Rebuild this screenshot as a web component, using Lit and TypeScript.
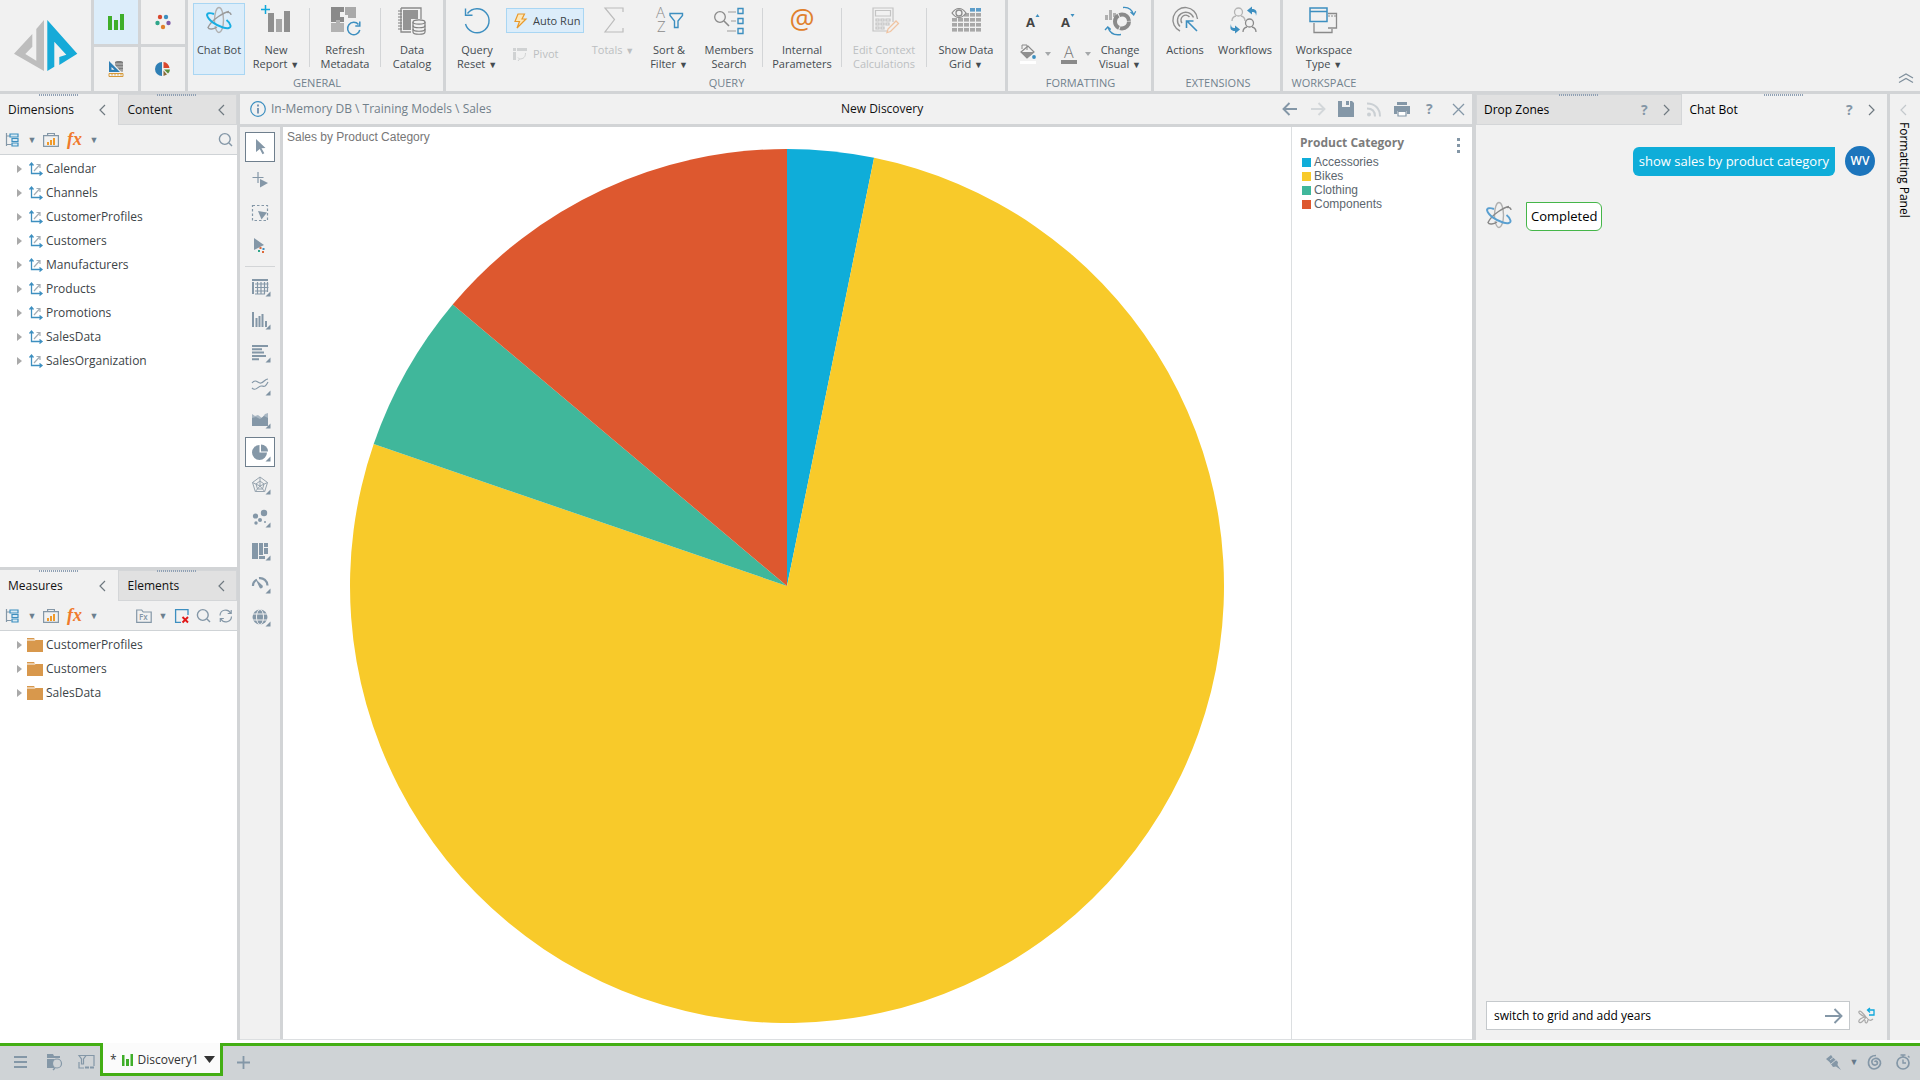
import { LitElement, html, svg, css, nothing } from "lit";
import { customElement } from "lit/decorators.js";
import { classMap } from "lit/directives/class-map.js";

const BLUE = "#3d8fc0";
const CYAN = "#0fa8dc";
const GREY = "#8a8a8a";
const LIGHT = "#b0b0b0";
const SLATE = "#8497a7";
const ORANGE = "#e0802c";

type Glyph = unknown;

const icon = (w: number, h: number, body: Glyph) =>
  html`<svg class="icon" width=${w} height=${h} viewBox="0 0 ${w} ${h}" fill="none" aria-hidden="true">${body}</svg>`;

const atom = (main: string, dark: string) => svg`
  <g fill="none" stroke-width="1.400">
    <ellipse cx="15" cy="16" rx="4.500" ry="12.500" stroke="${LIGHT}" stroke-dasharray="22 3 40"/>
    <path d="M25 7.500C21 8 8 15 4 23.500c1 2.500 6 1.500 9-.5M27 11c0-2-1.500-3-4-2.500" stroke="${dark}"/>
    <path d="M10 10C6 8.500 3 9 3 11c1 5 9 10.500 16 12.500 5 1.500 8 .5 7.500-2-.5-2-2-4-4-5.500" stroke="${main}" stroke-width="1.900"/>
  </g>`;

const person = (x: number, y: number, c: string) => svg`
  <g stroke="${c}" stroke-width="1.3"><circle cx="${x}" cy="${y}" r="4"/>
  <path d="M${x - 6.5} ${y + 9}c0-3 2-4.500 4-5M${x + 6.5} ${y + 9}c0-3-2-4.500-4-5"/></g>`;

const gridCells = () => {
  const out: Glyph[] = [];
  for (let r = 0; r < 5; r++)
    for (let c = 0; c < 5; c++) {
      if (r < 2 && c < 2 || (r === 0 && c === 2)) continue;
      out.push(svg`<rect x="${1 + c * 6}" y="${4 + r * 5}" width="5" height="3.600" fill="${r === 0 ? "#5d9dc9" : "#a8a8a8"}"/>`);
    }
  return out;
};

const R: Record<string, Glyph> = {
  atom: atom("#19aee2", "#9a9a9a"),
  report: svg`<path d="M7 9h6v19H7zM23 7h6v21h-6z" fill="#8f8f8f"/><path d="M15 15h6v13h-6z" fill="#a6a6a6"/><path d="M4.500 1v9M0 5.500h9" stroke="${CYAN}" stroke-width="1.500"/>`,
  metadata: svg`<path d="M1 3h13v5h-4v5h4v5H1z" fill="#8a8a8a"/><path d="M15 3h11v11h-8v-3h-3z" fill="#a9a9a9"/><path d="M1 19h5v-3h4v3h4v9H1z" fill="#b2b2b2"/>
    <path d="M28.500 20.500A6.200 6.200 0 1 0 29.800 26M29.800 17.500v4.500h-4.500" stroke="${BLUE}" stroke-width="1.500"/>`,
  catalog: svg`<path d="M4 4h20v11M4 4v24h10" stroke="#8a8a8a" stroke-width="1.300"/><path d="M6 6h15v9h-7v11H6z" fill="#949494"/>
    <path d="M1 7h4M1 10h4M1 13h4M1 16h4M1 19h4M1 22h4M1 25h4" stroke="#7f7f7f" stroke-width="1.200"/>
    <g fill="#f1f1f1" stroke="#7f7f7f" stroke-width="1.200"><path d="M16 18v10c0 3 12 3 12 0V18"/><ellipse cx="22" cy="18" rx="6" ry="2.200"/></g>
    <path d="M16 21.500c0 3 12 3 12 0M16 25c0 3 12 3 12 0" stroke="#7f7f7f" stroke-width="1.200"/>`,
  reset: svg`<path d="M3.500 20A12 12 0 1 0 5.500 9.500M3.500 4.500v6.800h7" stroke="${BLUE}" stroke-width="1.400"/>`,
  sigma: svg`<path d="M25 8V4H7l9.500 11.500L7 28h18v-4" stroke="#bcbcbc" stroke-width="1.200"/>`,
  sort: svg`<g fill="#8a8a8a" font-family="Open Sans,Noto Sans,sans-serif" font-size="15" font-weight="300"><text x="2" y="14">A</text><text x="3" y="28">Z</text></g>
    <path d="M16 9.500h12.500v2L24 17v6.500h-3.500V17L16 11.500z" stroke="${BLUE}" stroke-width="1.400"/>`,
  members: svg`<circle cx="6" cy="13" r="5.300" stroke="#8a8a8a" stroke-width="1.300"/><path d="M10 17l5 5" stroke="#8a8a8a" stroke-width="1.600"/>
    <path d="M14 8h8M17 17h5M13 27h9" stroke="#9c9c9c" stroke-width="1.200"/><path d="M24 4.500h5v5h-5zM24 14.500h5v5h-5zM24 24.500h5v5h-5z" stroke="${BLUE}" stroke-width="1.400"/>`,
  at: svg`<text x="15" y="25" text-anchor="middle" fill="${ORANGE}" font-family="Open Sans,Noto Sans,sans-serif" font-size="28">@</text>`,
  calc: svg`<g stroke="#c4c4c4" stroke-width="1.200"><path d="M24 18V4H4v23h14"/><path d="M6.500 6.500h15v5.500h-15z"/>
    <path d="M7 15h3v2H7zM12 15h3v2h-3zM17 15h4v2h-4zM7 19h3v2H7zM12 19h3v2h-3zM17 19h3v2h-3zM7 23h3v2H7zM12 23h3v2h-3z"/></g>
    <path d="M18 28.500l1-3.500 8-8 2.500 2.500-8 8z" stroke="#f0c4a2" stroke-width="1.300"/>`,
  datagrid: svg`${gridCells()}<path d="M1 9c4-6 10-6 14 0-4 6-10 6-14 0z" fill="#f1f1f1" stroke="#8a8a8a" stroke-width="1.200"/><circle cx="8" cy="9" r="3" stroke="#8a8a8a" stroke-width="1.300"/>`,
  visual: svg`<path d="M0 11h3v5H0zM4 6h3v10H4zM8 9h3v4H8z" fill="#b0b0b0"/><circle cx="17" cy="17.500" r="7" stroke="#8a8a8a" stroke-width="4" stroke-dasharray="13 1 15 1"/>
    <path d="M18 3.500c5-.5 9 2 10.500 7M25.500 8l3.200 3 2-3.800M16 30.500c-6 1-11-1-13-7M0 26l2.800-3 3 2.500" stroke="${BLUE}" stroke-width="1.300"/>`,
  actions: svg`<g stroke="#8f8f8f" stroke-width="1.400"><path d="M10 27A12.300 12.300 0 1 1 27.500 15"/><path d="M10 22.500A8.300 8.300 0 1 1 23.500 13.500"/><path d="M12 19A4.700 4.700 0 1 1 19.500 13"/></g>
    <path d="M27 27L17 17M16.500 24v-7h7" stroke="${BLUE}" stroke-width="1.600"/>`,
  workflows: svg`${person(8.5, 8, "#b4b4b4")}${person(19.5, 19, "#8a8a8a")}<path d="M26 12c0-3-1-4-4-4v2.500l-5-4 5-4V5c4 0 5.500 2 4 7zM1 20c0 3 1 4 4 4v-2.500l5 4-5 4V27c-4 0-5.500-2-4-7z" fill="${BLUE}"/>`,
  workspace: svg`<path d="M19 9.500h8.500V24H19M5 19v9.500h18V25" stroke="#8a8a8a" stroke-width="1.300"/><path d="M19 12h8" stroke="#8a8a8a" stroke-width="1" stroke-dasharray="2 1"/>
    <path d="M1 4h17v13.500H1zM1 7.500h17" stroke="${BLUE}" stroke-width="1.500"/>`,
};

/* 16px panel-toolbar glyphs */
const S: Record<string, Glyph> = {
  tree: svg`<path d="M1.500 1v13M1.500 4h5M1.500 12.500h5M8 7.500h2" stroke="${SLATE}" stroke-width="1.200"/><path d="M5 2h8v3H5zM7 6.500h6v3H7zM7 11h6v3H7z" fill="#d8eaf4" stroke="${BLUE}" stroke-width="1.200"/>`,
  brief: svg`<path d="M.6 3.600h14.800v10.800H.6zM4.600 3.500v-2h6.800v2" stroke="${SLATE}" stroke-width="1.200"/><path d="M4 10h2v3H4zM7 8h2v5H7zM10 6h2v7h-2z" fill="#f09a2a"/>`,
  fx: svg`<text x="0" y="13" fill="#f07a2c" font-family="Liberation Serif,serif" font-style="italic" font-weight="700" font-size="18">fx</text>`,
  search: svg`<circle cx="6.800" cy="7" r="5.400" stroke="${SLATE}" stroke-width="1.400"/><path d="M11 11l3 3" stroke="${SLATE}" stroke-width="1.400"/>`,
  fxFolder: svg`<path d="M.7 14.300V2h5l1.500 2h8v10.300z" stroke="${SLATE}" stroke-width="1.200"/><text x="3" y="12" fill="${SLATE}" font-family="Open Sans,sans-serif" font-size="8" font-weight="600">Fx</text>`,
  boxX: svg`<path d="M14 7V1.600H1.600V14.400H7" stroke="${BLUE}" stroke-width="1.300"/><path d="M8.500 9l5.500 5.500M14 9l-5.500 5.500" stroke="#e01818" stroke-width="1.900"/>`,
  refresh: svg`<path d="M2 7.500A5.600 5.600 0 0 1 12.500 5M13.500 8.500A5.600 5.600 0 0 1 3 11M13.200 2v3.500h-3.500M2.300 14v-3.500h3.500" stroke="${SLATE}" stroke-width="1.200"/>`,
  axis: svg`<path d="M4.500 2.500v10H14M2.500 4.500l2-2.500 2 2.500M12.500 10.500l2.500 2-2.500 2" stroke="${BLUE}" stroke-width="1.300"/><path d="M7 10l5.500-6M9.500 3.500H13V7" stroke="#a4aeb6" stroke-width="1.200"/>`,
  folder: svg`<path d="M0 1h7l1 1.500H0zM0 3.600h8l.6-.6H16V15H0z" fill="#d8984c"/>`,
};

/* 20px visual-palette glyphs */
const corner = svg`<path d="M19.500 14.500v5h-5z" fill="#7f92a2"/>`;
const P: Record<string, Glyph> = {
  pointer: svg`<path d="M5 2l9.500 9-4 .3 2.800 5-1.800 1-2.700-5.300L5 15z" fill="${SLATE}"/>`,
  addPoint: svg`<path d="M7 2v11M1.500 7.500h11" stroke="${SLATE}" stroke-width="1.200"/><path d="M9 9l8 4-8 4.500z" fill="${SLATE}"/>`,
  lasso: svg`<path d="M1.500 2.500h15v15h-15z" stroke="${SLATE}" stroke-width="1.200" stroke-dasharray="2.500 2"/><path d="M7 8l9 1.500-5.500 7z" fill="${SLATE}"/>`,
  highlight: svg`<path d="M3 2l10 7-10 5z" fill="${SLATE}"/><path d="M7 14h2v2H7z" fill="#2fa68a"/><path d="M8.500 11h2v2h-2zM11 15h2v2h-2z" fill="#dd6a3a"/><path d="M11.500 12h2v2h-2z" fill="${BLUE}"/>`,
  grid: svg`<path d="M1 2h16v2H1zM1 5h2v12H1z" fill="${SLATE}"/><path d="M6.500 5v12M10 5v12M13.500 5v12M16.500 5v10M4 7h13.500M4 10.500h13.500M4 14h13M4 17h10" stroke="${SLATE}" stroke-width="1.200"/>${corner}`,
  column: svg`<path d="M1 2h2v15H1zM4.500 8h2v9h-2zM7.500 6h2v11h-2zM10.500 4h2v13h-2zM14 11h2v6h-2z" fill="${SLATE}"/>${corner}`,
  bar: svg`<path d="M1 2h16v2H1zM1 5.300h10v2H1zM1 8.600h12v2H1zM1 11.900h14v2H1zM1 15.200h7v2H1z" fill="${SLATE}"/>${corner}`,
  line: svg`<path d="M1 7c4-5 6 1 9 0s4-4 7-4M1 12c4 4 6-2 9-2s4 2 7-4" stroke="${SLATE}" stroke-width="1.200"/>${corner}`,
  area: svg`<path d="M1 5l3 2 3-1 4 3 3-4 3-1v13H1z" fill="#a9b7c3"/><path d="M1 9l4-1 4 2 4-3 4 2v8H1z" fill="${SLATE}"/>${corner}`,
  pie: svg`<path d="M8.500 3a7.500 7.500 0 1 0 7.500 7.500H8.500z" fill="${SLATE}"/><path d="M10 2.500a7 7 0 0 1 7 7h-7z" fill="${SLATE}"/>${corner}`,
  radar: svg`<path d="M9 2l7.500 5.500-2.800 9H4.300L1.500 7.500zM9 6l4 3-1.500 5h-5L5 9zM9 2v9M1.500 7.500L9 11l7.500-3.500M4.300 16.500L9 11l4.700 5.500" stroke="#96a3ae" stroke-width="1"/>${corner}`,
  scatter: svg`<g fill="${SLATE}"><circle cx="13" cy="5" r="3.200"/><circle cx="4.500" cy="8" r="2.600"/><circle cx="9" cy="12" r="2"/><circle cx="5" cy="15" r="1.700"/><circle cx="14" cy="14" r="1"/></g>${corner}`,
  treemap: svg`<path d="M1 2h6v16H1zM8 2h4v12H8zM13 2h4v4h-4zM13 7h4v6h-4zM8 15h6v3H8z" fill="${SLATE}"/>${corner}`,
  gauge: svg`<path d="M2 12a7 6.500 0 0 1 4-6.300M8 4.200a7.500 7.500 0 0 1 8.500 7.300" stroke="${SLATE}" stroke-width="2.200"/><path d="M4.500 5l7 6.500a1.800 1.800 0 0 1-3 2z" fill="${SLATE}"/>${corner}`,
  globe: svg`<circle cx="9" cy="10" r="7.500" fill="${SLATE}"/><path d="M1.500 7h15M1.500 13h15" stroke="#f1f1f1" stroke-width="1.200"/><ellipse cx="9" cy="10" rx="3.500" ry="7.500" stroke="#f1f1f1"/>${corner}`,
};

interface RibbonItem { icon: string; lines: string[]; menu?: boolean; size: string; off?: boolean; on?: boolean; }

@customElement("ribbon-button")
class RibbonButton extends LitElement {
  static properties = { item: { attribute: false } };
  declare item: RibbonItem;
  static styles = css`
    :host { display: block; }
    button { font: inherit; font-size: 11px; color: #444b50; height: 72px; padding: 0; margin: 0; border: 1px solid transparent; background: none;
      display: flex; flex-direction: column; align-items: center; gap: 9px; line-height: 14px; white-space: nowrap; }
    .s { width: 52px; } .q { width: 54px; } .m { width: 58px; } .l { width: 62px; } .x { width: 66px; } .xx { width: 74px; } .w { width: 80px; }
    .on { background: #dcedfa; border-color: #a9d6f3; }
    .off { color: #bcbfc1; }
    .icon { flex: none; overflow: visible; }
    span { display: block; }
    small { font-size: 9px; }
  `;
  render() {
    const b = this.item;
    const last = b.lines.length - 1;
    return html`<button class=${classMap({ [b.size]: true, on: !!b.on, off: !!b.off })} ?disabled=${b.off}>
      ${icon(30, 30, R[b.icon])}
      <span>${b.lines.map((t, i) => html`<span>${t}${b.menu && i === last ? html` <small>▼</small>` : nothing}</span>`)}</span>
    </button>`;
  }
}

const slices = [
  { name: "Accessories", color: "#0fadd9", to: 11.5 },
  { name: "Bikes", color: "#f8ca2a", to: 288.95 },
  { name: "Clothing", color: "#40b79b", to: 310.1 },
  { name: "Components", color: "#dd582f", to: 360 },
];

@customElement("pie-chart")
class PieChart extends LitElement {
  static styles = css`
    :host { display: block; min-height: 0; }
    svg { display: block; width: 100%; height: 100%; }
  `;
  render() {
    const r = 437;
    let from = 0;
    return html`<svg viewBox="0 0 874 874" role="img" aria-label="Sales by Product Category">
      ${slices.map((s) => {
        const p = (a: number) => {
          const t = (a * Math.PI) / 180;
          return `${(r + r * Math.sin(t)).toFixed(1)} ${(r - r * Math.cos(t)).toFixed(1)}`;
        };
        const d = `M${r} ${r}L${p(from)}A${r} ${r} 0 ${s.to - from > 180 ? 1 : 0} 1 ${p(s.to)}Z`;
        from = s.to;
        return svg`<path d="${d}" fill="${s.color}"/>`;
      })}
    </svg>`;
  }
}

const general: (RibbonItem | null)[] = [
  { icon: "atom", lines: ["Chat Bot"], size: "s", on: true },
  { icon: "report", lines: ["New", "Report"], menu: true, size: "l" },
  null,
  { icon: "metadata", lines: ["Refresh", "Metadata"], size: "x" },
  null,
  { icon: "catalog", lines: ["Data", "Catalog"], size: "m" },
];
const query: (RibbonItem | null)[] = [
  { icon: "sigma", lines: ["Totals"], menu: true, size: "q", off: true },
  { icon: "sort", lines: ["Sort &", "Filter"], menu: true, size: "m" },
  { icon: "members", lines: ["Members", "Search"], size: "l" },
  null,
  { icon: "at", lines: ["Internal", "Parameters"], size: "xx" },
  null,
  { icon: "calc", lines: ["Edit Context", "Calculations"], size: "w", off: true },
  null,
  { icon: "datagrid", lines: ["Show Data", "Grid"], menu: true, size: "xx" },
];

@customElement("app-root")
class AppRoot extends LitElement {
  static styles = css`
    :host { display: flex; flex-direction: column; height: 100vh; overflow: hidden; background: #fff; color: #3c4448;
      font: 12px/16px "Open Sans", "Noto Sans", sans-serif; --line: #d2d4d6; --panel: #f1f1f1; }
    * { box-sizing: border-box; }
    button { font: inherit; color: inherit; background: none; border: 0; padding: 0; margin: 0; display: flex; align-items: center; justify-content: center; }
    .icon { display: block; flex: none; overflow: visible; }

    .ribbon { display: flex; background: var(--panel); border-bottom: 3px solid var(--line); height: 94px; flex: none; }
    .logo { width: 91px; display: flex; align-items: center; justify-content: center; }
    .modes { display: grid; grid-template-columns: 44px 44px; grid-template-rows: 44px 44px; gap: 3px; background: var(--line); border: solid var(--line); border-width: 0 3px; }
    .modes button { background: var(--panel); }
    .modes .on { background: #dcedfa; }
    .group { display: flex; flex-direction: column; border-right: 3px solid var(--line); padding: 3px 2px 0 5px; }
    .group.wide { padding-left: 4px; }
    .group.end { border-right: 0; padding-right: 4px; }
    .items { display: flex; height: 72px; }
    .caption { font-size: 11px; line-height: 16px; text-align: center; color: #72828e; }
    .rule { width: 1px; height: 59px; margin: 5px 2px; background: #d3d5d7; }
    .stack { width: 78px; margin: 5px 2px; display: flex; flex-direction: column; gap: 8px; font-size: 11px; }
    .stack button { height: 25px; gap: 6px; justify-content: flex-start; padding-left: 6px; border: 1px solid transparent; white-space: nowrap; }
    .stack .on { background: #dcedfa; border-color: #a9d6f3; }
    .stack button:disabled { color: #bcbfc1; }
    .fonts { display: grid; grid-template-columns: 41px 30px; grid-template-rows: 34px 34px; padding-left: 8px; }
    .fonts button { justify-content: flex-start; gap: 8px; }
    .collapse { margin-left: auto; align-self: flex-end; padding: 8px 7px; }

    .body { flex: 1; min-height: 0; display: flex; }
    .left { width: 240px; flex: none; border-right: 3px solid var(--line); display: flex; flex-direction: column; }
    .pane { flex: 0 0 auto; }
    .pane.upper { flex: 0 0 calc(50% + 3px); border-bottom: 3px solid var(--line); }
    .tabs { display: flex; height: 31px; background: var(--panel); flex: none; }
    .tab { flex: 1 1 0; display: flex; align-items: center; gap: 16px; padding: 0 12px 0 8px; color: #111; font-weight: 500; position: relative; white-space: nowrap; }
    .tab span { flex: 1; }
    .tab.back { background: #e1e1e1; box-shadow: inset 0 0 0 1px #d4d6d8; }
    .left .tab.back { padding-left: 10px; }
    .tab::before { content: ""; position: absolute; top: 0; left: calc(50% - 20px); width: 40px; height: 2px;
      background: repeating-linear-gradient(90deg, #8fa0b4 0 1px, transparent 1px 2px); }
    .tools { display: flex; align-items: center; height: 30px; padding: 0 3px 0 5px; background: var(--panel); border-bottom: 1px solid #cfd3d6; }
    .tools .drop { font-size: 9px; color: #6c7f8e; width: 22px; }
    .tools .gap { width: 8px; } .tools .gap.tight { width: 6px; } .tools .push { margin-left: auto; }
    ul { list-style: none; margin: 0; padding: 2px 0 0; }
    li button { height: 24px; gap: 3px; padding-left: 17px; }

    .center { flex: 1; min-width: 0; display: flex; flex-direction: column; }
    .head { display: grid; grid-template-columns: 14fr auto 13fr; align-items: center; height: 33px; flex: none; background: var(--panel); border-bottom: 3px solid var(--line); padding: 0 0 0 10px; }
    .crumb { display: flex; align-items: center; gap: 5px; color: #71808a; white-space: nowrap; }
    h1 { font: inherit; font-weight: 500; color: #111; margin: 0; }
    .acts { display: flex; justify-content: flex-end; }
    .acts button { width: 28px; height: 28px; }
    .work { flex: 1; min-height: 0; display: flex; border-bottom: 1px solid #dcdfe1; }
    .palette { width: 43px; flex: none; background: var(--panel); border-right: 3px solid var(--line); padding: 5px 5px 0; display: flex; flex-direction: column; gap: 3px; }
    .palette button { height: 30px; border: 1px solid transparent; }
    .palette .on { background: #fff; border-color: #6f7f8d; }
    .palette .rule { width: auto; height: 1px; margin: 2px 0; }
    .chart { flex: 1; min-width: 0; display: flex; flex-direction: column; padding-bottom: 16px; font-family: "Liberation Sans", Arial, sans-serif; }
    .chart h2 { font: inherit; line-height: 20px; margin: 0; padding-left: 4px; height: 22px; color: #777; flex: none; }
    .chart pie-chart { flex: 1; }
    .legend { width: 181px; flex: none; border-left: 1px solid #dcdfe1; padding: 8px 11px 0 8px; font: 12px/14px "Liberation Sans", Arial, sans-serif; color: #5c666e; }
    .legend header { display: flex; justify-content: space-between; font-weight: 700; font-family: "Open Sans", "Noto Sans", sans-serif; line-height: 16px; color: #7c7c7c; height: 20px; }
    .legend ul { padding: 0; } .legend li { display: flex; align-items: center; gap: 3px; padding-left: 2px; }
    .chip { width: 9px; height: 9px; }

    .right { width: 415px; flex: none; border-left: 4px solid var(--line); background: var(--panel); display: flex; flex-direction: column; }
    .right .tab { font-weight: 400; color: #000; gap: 13px; }
    .log { flex: 1; padding: 21px 12px 0 9px; font-size: 13px; line-height: 19px; }
    .mine { display: flex; align-items: center; justify-content: flex-end; gap: 10px; margin-bottom: 25px; }
    .bubble { background: #0fadd9; color: #fff; padding: 5px 6px; border-radius: 6px 0 6px 6px; }
    .avatar { width: 30px; height: 30px; border-radius: 50%; background: #1c75bc; color: #fff; font-weight: 600; font-size: 12px; line-height: 30px; text-align: center; }
    .bot { display: flex; align-items: center; gap: 13px; }
    .reply { background: #fff; color: #000; border: 1px solid #45b649; border-radius: 0 6px 6px 6px; padding: 4px 4px; }
    .ask { display: flex; align-items: center; gap: 8px; padding: 0 12px 10px 10px; }
    .field { flex: 1; display: flex; height: 29px; border: 1px solid #c5c9cc; background: #fff; }
    input { flex: 1; min-width: 0; border: 0; outline: 0; background: none; padding: 0 7px; font: inherit; color: #000; }
    .field button { width: 30px; }
    .side { width: 33px; flex: none; border-left: 3px solid var(--line); background: var(--panel); color: #000; padding: 10px 3px 0 0; display: flex; flex-direction: column; align-items: center; gap: 6px; }
    .side span { writing-mode: vertical-rl; }

    .status { display: flex; flex: none; height: 40px; padding-top: 3px; align-items: stretch; background: #fff; color: #333; }
    .bar { background: #cfd3d6; border-top: 3px solid #43ae14; display: flex; align-items: center; padding-bottom: 2px; }
    .bar.start { width: 100px; gap: 15px; padding-left: 14px; }
    .bar.rest { flex: 1; padding: 0 9px 2px 14px; }
    .bar.rest .push { margin-left: auto; }
    .bar .drop { font-size: 9px; color: #66788a; width: 26px; }
    .slot { background: #cfd3d6; display: flex; align-items: flex-start; }
    .doc { height: 33px; width: 123px; border: solid #43ae14; border-width: 0 3px 3px; background: #fbfbfb; display: flex; align-items: center; justify-content: space-between; padding: 3px 5px 0 7px; white-space: nowrap; }
    .doc span { display: flex; align-items: center; gap: 5px; }
    .spaced { margin-left: 12px; }
  `;

  private chevron(dir: "l" | "r", color = "#6f7980") {
    return icon(7, 12, svg`<path d="${dir === "l" ? "M6 1L1 6l5 5" : "M1 1l5 5-5 5"}" stroke="${color}" stroke-width="1.200"/>`);
  }
  private get help() {
    return icon(10, 14, svg`<text x="1" y="12" fill="${SLATE}" font-family="Open Sans,sans-serif" font-weight="700" font-size="14">?</text>`);
  }
  private item(b: RibbonItem | null) {
    return b ? html`<ribbon-button .item=${b}></ribbon-button>` : html`<div class="rule"></div>`;
  }
  private tool(name: string, label: string, cls = "") {
    return html`<button class=${cls} aria-label=${label}>${icon(16, 16, S[name])}</button>`;
  }
  private leftTabs(a: string, b: string) {
    return html`<div class="tabs">
      <div class="tab"><span>${a}</span><button aria-label="Collapse">${this.chevron("l")}</button></div>
      <div class="tab back"><span>${b}</span><button aria-label="Collapse">${this.chevron("l")}</button></div>
    </div>`;
  }
  private rows(names: string[], glyph: string) {
    return html`<ul>${names.map((n) => html`<li><button>
      ${icon(7, 10, svg`<path d="M0 1l5 4-5 4z" fill="#a9a9a9"/>`)}${icon(16, 16, S[glyph])}${n}</button></li>`)}</ul>`;
  }
  private get commonTools() {
    return html`${this.tool("tree", "Hierarchy view")}<button class="drop" aria-label="View options">▼</button>
      ${this.tool("brief", "Business view")}<i class="gap"></i>${this.tool("fx", "Formula")}<button class="drop" aria-label="Formula options">▼</button>`;
  }

  private ribbon() {
    return html`<div class="ribbon">
      <div class="logo">${icon(64, 51, svg`<path d="M30 0V51L0 33.700 18.300 14V26.700L11.300 34l11 6.700V9z" fill="#bdbdbd"/><path d="M33.300 0l30 33.700-18 11.300V37l7-2.300-12-13V46.700l-7 4.300z" fill="#16aad8"/>`)}</div>
      <div class="modes">
        <button class="on" aria-label="Discover">${icon(18, 18, svg`<path d="M1 3h4v14H1zM7 7h4v10H7zM13 1h4v16h-4z" fill="#3fae29"/>`)}</button>
        <button aria-label="Present">${icon(16, 16, svg`<circle cx="5" cy="3" r="2.200" fill="#d9482e"/><circle cx="11" cy="3" r="2.200" fill="${BLUE}"/><circle cx="2.500" cy="9" r="2.200" fill="#2fa68a"/><circle cx="13.500" cy="9" r="2.200" fill="#7f5aa8"/><circle cx="8" cy="13" r="2.200" fill="#e0802c"/>`)}</button>
        <button aria-label="Model">${icon(16, 16, svg`<path d="M1 0v11h11zM3.500 6v2.800h3z" fill="#2f7fb5" fill-rule="evenodd"/><path d="M7 1c0-1.500 8-1.500 8 0v9.500h-2L7 4z" fill="#7d7d7d"/><path d="M7 3h8M9 6h6M12 9h3" stroke="#d5d5d5" stroke-width=".8"/><path d="M1 12.500h14v3H1z" stroke="#d79a3a"/><path d="M4 13v1.500M7 13v1.500M10 13v1.500M13 13v1.500" stroke="#d79a3a"/>`)}</button>
        <button aria-label="Illustrate">${icon(16, 16, svg`<path d="M7 1v14A7 7 0 0 1 7 1z" fill="#2f7fb5"/><path d="M8.500 1a6.500 6.500 0 0 1 6 6h-6z" fill="#d9482e"/><path d="M9 8.500h6a6 6 0 0 1-2 4z" fill="#5c8f3a"/><path d="M8.500 9.500l3.500 4-3.500 1.500z" fill="#8a6a3a"/>`)}</button>
      </div>
      <div class="group"><div class="items">${general.map((b) => this.item(b))}</div><div class="caption">GENERAL</div></div>
      <div class="group wide"><div class="items">
        ${this.item({ icon: "reset", lines: ["Query", "Reset"], menu: true, size: "q" })}
        <div class="stack">
          <button class="on">${icon(14, 16, svg`<path d="M5 1h6.500L9 6h4L4 15l2.500-6.500H2z" fill="#fde7b8" stroke="#e89a2c" stroke-width="1.200"/>`)}Auto Run</button>
          <button disabled>${icon(14, 14, svg`<path d="M0 1h3v3H0zM4 1h10v3H4zM0 5h3v8H0z" fill="#d0d2d3"/><path d="M12.500 6c0 4-2 6-6 6M5 10.500L6.500 12 5 14" stroke="#d0d2d3"/>`)}Pivot</button>
        </div>
        ${query.map((b) => this.item(b))}</div><div class="caption">QUERY</div></div>
      <div class="group wide"><div class="items">
        <div class="fonts">
          <button aria-label="Increase font size">${icon(20, 16, svg`<text x="6" y="15" font-family="Open Sans,sans-serif" font-size="13" font-weight="700" fill="#444">A</text><path d="M15.500 5l2-3 2 3z" fill="${BLUE}"/>`)}</button>
          <button aria-label="Decrease font size">${icon(20, 16, svg`<text x="0" y="15" font-family="Open Sans,sans-serif" font-size="13" font-weight="700" fill="#444">A</text><path d="M9.500 2l2 3 2-3z" fill="${BLUE}"/>`)}</button>
          <button aria-label="Fill colour">${icon(17, 20, svg`<path d="M0 17h16v3H0z" fill="#fff"/><path d="M1 8l7-6 6 6-7 6z" fill="#f1f1f1" stroke="${GREY}" stroke-width="1.200"/><path d="M1 8h13l-7 6z" fill="#8f8f8f"/><path d="M2 5V1h5v5" stroke="${GREY}"/><circle cx="14" cy="13" r="1.900" fill="${BLUE}"/>`)}${icon(6, 4, svg`<path d="M0 0h6L3 4z" fill="#a5a8aa"/>`)}</button>
          <button aria-label="Font colour">${icon(16, 20, svg`<text x="3" y="14" font-family="Open Sans,sans-serif" font-size="16" font-weight="300" fill="#777">A</text><path d="M0 16h16v4H0z" fill="#8a8a8a"/>`)}${icon(6, 4, svg`<path d="M0 0h6L3 4z" fill="#a5a8aa"/>`)}</button>
        </div>
        ${this.item({ icon: "visual", lines: ["Change", "Visual"], menu: true, size: "m" })}</div><div class="caption">FORMATTING</div></div>
      <div class="group wide"><div class="items">
        ${this.item({ icon: "actions", lines: ["Actions"], size: "q" })}${this.item({ icon: "workflows", lines: ["Workflows"], size: "x" })}
        </div><div class="caption">EXTENSIONS</div></div>
      <div class="group wide end"><div class="items">${this.item({ icon: "workspace", lines: ["Workspace", "Type"], menu: true, size: "xx" })}</div><div class="caption">WORKSPACE</div></div>
      <button class="collapse" aria-label="Collapse ribbon">${icon(14, 10, svg`<path d="M0 5l7-4 7 4M0 9.500l7-4 7 4" stroke="#7f8f9c" stroke-width="1.200"/>`)}</button>
    </div>`;
  }

  private left() {
    return html`<div class="left">
      <section class="pane upper">${this.leftTabs("Dimensions", "Content")}
        <div class="tools">${this.commonTools}${this.tool("search", "Search", "push")}</div>
        ${this.rows(["Calendar", "Channels", "CustomerProfiles", "Customers", "Manufacturers", "Products", "Promotions", "SalesData", "SalesOrganization"], "axis")}
      </section>
      <section class="pane">${this.leftTabs("Measures", "Elements")}
        <div class="tools">${this.commonTools}${this.tool("fxFolder", "Formula folder", "push")}<button class="drop" aria-label="Folder options">▼</button>
          ${this.tool("boxX", "Clear")}<i class="gap tight"></i>${this.tool("search", "Search")}<i class="gap tight"></i>${this.tool("refresh", "Refresh")}</div>
        ${this.rows(["CustomerProfiles", "Customers", "SalesData"], "folder")}
      </section>
    </div>`;
  }

  private center() {
    const names = Object.keys(P);
    return html`<main class="center">
      <div class="head">
        <div class="crumb">${icon(16, 16, svg`<circle cx="8" cy="8" r="7.300" stroke="${BLUE}" stroke-width="1.200"/><path d="M8 7v5.500M8 3.500v2" stroke="#6f8fb0" stroke-width="1.800"/>`)}In-Memory DB \\ Training Models \\ Sales</div>
        <h1>New Discovery</h1>
        <div class="acts">
          <button aria-label="Back">${icon(16, 14, svg`<path d="M15 7H2M7.500 1L1.500 7l6 6" stroke="${SLATE}" stroke-width="1.900"/>`)}</button>
          <button aria-label="Forward" disabled>${icon(16, 14, svg`<path d="M1 7h13M8.500 1l6 6-6 6" stroke="#d3d7da" stroke-width="1.900"/>`)}</button>
          <button aria-label="Save">${icon(16, 16, svg`<path d="M0 0h4v6h8V0h2l2 2v14H0zM8 0h3v4H8z" fill="${SLATE}"/>`)}</button>
          <button aria-label="Subscribe" disabled>${icon(16, 16, svg`<circle cx="3" cy="13.500" r="2" fill="#cbd0d4"/><path d="M1 7.500c5 0 8 3 8 8M1 2.500c8 0 13 5 13 13" stroke="#cbd0d4" stroke-width="2"/>`)}</button>
          <button aria-label="Print">${icon(16, 16, svg`<path d="M3 1h10v3H3zM0 5h16v8h-3v-3H3v3H0z" fill="${SLATE}"/><path d="M4 10.500h8V15H4z" fill="#fff" stroke="${SLATE}" stroke-width="1.200"/>`)}</button>
          <button aria-label="Help">${this.help}</button>
          <button aria-label="Close">${icon(13, 13, svg`<path d="M1 1l11 11M12 1L1 12" stroke="${SLATE}" stroke-width="1.300"/>`)}</button>
        </div>
      </div>
      <div class="work">
        <div class="palette">${names.map((n, i) => html`${i === 4 ? html`<div class="rule"></div>` : nothing}
          <button class=${n === "pointer" || n === "pie" ? "on" : ""} aria-label=${n}>${icon(20, 20, svg`<g transform="translate(1 0)">${P[n]}</g>`)}</button>`)}</div>
        <section class="chart"><h2>Sales by Product Category</h2><pie-chart></pie-chart></section>
        <aside class="legend">
          <header>Product Category<button aria-label="Legend menu">${icon(4, 16, svg`<path d="M0 1h3v3H0zM0 7h3v3H0zM0 13h3v3H0z" fill="${SLATE}"/>`)}</button></header>
          <ul>${slices.map((s) => html`<li><i class="chip" style="background:${s.color}"></i>${s.name}</li>`)}</ul>
        </aside>
      </div>
    </main>`;
  }

  private right() {
    return html`<aside class="right">
      <div class="tabs">
        <div class="tab back"><span>Drop Zones</span><button aria-label="Help">${this.help}</button><button aria-label="Collapse">${this.chevron("r")}</button></div>
        <div class="tab"><span>Chat Bot</span><button aria-label="Help">${this.help}</button><button aria-label="Collapse">${this.chevron("r")}</button></div>
      </div>
      <div class="log">
        <div class="mine"><div class="bubble">show sales by product category</div><div class="avatar">WV</div></div>
        <div class="bot">${icon(28, 30, svg`<g transform="translate(-1 -2)">${atom("#5a9fd0", "#888")}</g>`)}<div class="reply">Completed</div></div>
      </div>
      <div class="ask">
        <div class="field"><input aria-label="Message" .value=${"switch to grid and add years"} /><button aria-label="Send">${icon(18, 16, svg`<path d="M0 8h16M9.500 1l7 7-7 7" stroke="${SLATE}" stroke-width="1.900"/>`)}</button></div>
        <button aria-label="Reset conversation">${icon(17, 16, svg`<path d="M10 2h6v5h-5M12 0L9.500 2 12 4.500" stroke="${CYAN}" stroke-width="1.300"/><path d="M7 9C3 7 0 5 1 3.500S5 5 8 9s5 4 7 2M8 9C4 9 0 12 1 14s5-1 7-5M7 12c0 4 2 4 3 0" stroke="#a9a9a9" stroke-width="1.200"/>`)}</button>
      </div>
    </aside>`;
  }

  private status() {
    const c = SLATE;
    return html`<footer class="status">
      <div class="bar start">
        <button aria-label="Menu">${icon(17, 12, svg`<path d="M0 1h13M0 6h13M0 11h13" stroke="${c}" stroke-width="2"/>`)}</button>
        <button aria-label="Find content">${icon(17, 16, svg`<path d="M1 0h6l1 2h6v2H1z" fill="${c}"/><path d="M1 5h7v9H1z" fill="${c}"/><circle cx="11" cy="9.500" r="4.500" fill="#cfd3d6" stroke="${c}" stroke-width="1.200"/><path d="M9 14l-2 2" stroke="${c}" stroke-width="1.500"/>`)}</button>
        <button aria-label="Filter layout">${icon(17, 16, svg`<path d="M8 1.500h8V12M6 14H1V8M1 1.500h7L5.500 5v5h-2V5z" stroke="${c}" stroke-width="1.200"/><path d="M7 12.500h4v2H7zM12 12.500h4v2h-4z" fill="${c}"/>`)}</button>
      </div>
      <div class="slot"><div class="doc"><span>*${icon(11, 12, svg`<path d="M0 1h2.500v11H0zM4 5h3v7H4zM8.500 0H11v12H8.500z" fill="#3fae29"/>`)}Discovery1</span><button aria-label="Document menu">${icon(11, 7, svg`<path d="M0 0h11L5.500 7z" fill="#333"/>`)}</button></div></div>
      <div class="bar rest">
        <button aria-label="Add tab">${icon(13, 13, svg`<path d="M6.500 0v13M0 6.500h13" stroke="${c}" stroke-width="1.800"/>`)}</button>
        <button class="push" aria-label="Pin">${icon(16, 16, svg`<path d="M1 5l5-4 1.500 2L13 8l-.5 3L16 16l-5-3.500-3 .5-3.500-5z" fill="${c}"/><path d="M5 6l5-4M6 10l6-5" stroke="#cfd3d6"/>`)}</button>
        <button class="drop" aria-label="Pin options">▼</button>
        <button aria-label="Activity">${icon(16, 16, svg`<path d="M8 8c0-1.500 2.500-1 2.500 1S7 12 5.500 10 5 5 8 4.500s6 2 5.500 5S10 15 7 15 1 12 1.500 8 5 1.500 9 1.500" stroke="${c}" stroke-width="1.700"/>`)}</button>
        <button class="spaced" aria-label="Timer">${icon(16, 16, svg`<circle cx="8" cy="9" r="6" stroke="${c}" stroke-width="1.700"/><path d="M5.500 1h5M8 1v2M8 5.500V9h3M13 2l1.500 1.500" stroke="${c}" stroke-width="1.400"/>`)}</button>
      </div>
    </footer>`;
  }

  render() {
    return html`${this.ribbon()}
      <div class="body">${this.left()}${this.center()}${this.right()}
        <div class="side"><button aria-label="Expand">${this.chevron("l", "#c3c8cc")}</button><span>Formatting Panel</span></div>
      </div>
      ${this.status()}`;
  }
}
